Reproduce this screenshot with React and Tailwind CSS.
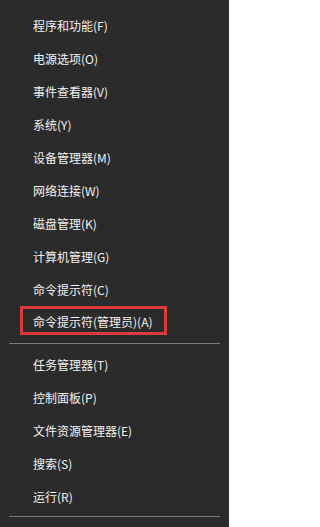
import React from 'react';

const groupOne = [
  '程序和功能(F)',
  '电源选项(O)',
  '事件查看器(V)',
  '系统(Y)',
  '设备管理器(M)',
  '网络连接(W)',
  '磁盘管理(K)',
  '计算机管理(G)',
  '命令提示符(C)',
];

const groupTwo = ['任务管理器(T)', '控制面板(P)', '文件资源管理器(E)', '搜索(S)', '运行(R)'];

const MenuItem = ({ label }) => (
  <div className="h-[33px] flex items-center pl-[33px] text-[12px] text-[#f2f2f2] leading-none">
    {label}
  </div>
);

export default function App() {
  return (
    <div
      className="w-[229px] h-[527px] bg-[#2b2b2b] overflow-hidden pt-[9px]"
      style={{ fontFamily: '"Microsoft YaHei", "Noto Sans CJK SC", sans-serif' }}
    >
      {groupOne.map((label) => (
        <MenuItem key={label} label={label} />
      ))}

      {/* highlighted entry */}
      <div className="h-[33px]">
        <div className="ml-[20px] w-[147px] h-[29px] border-[3px] border-[#dc3a3d] flex items-center pl-[10px] pt-[3px] text-[12px] text-[#f2f2f2] leading-none">
          命令提示符(管理员)(A)
        </div>
      </div>

      <div className="mx-[9px] mt-[4px] h-px bg-[#7c7c7c]" />

      <div className="pt-[4px]">
        {groupTwo.map((label) => (
          <MenuItem key={label} label={label} />
        ))}
      </div>

      <div className="mx-[9px] mt-[3px] h-px bg-[#7c7c7c]" />
    </div>
  );
}
